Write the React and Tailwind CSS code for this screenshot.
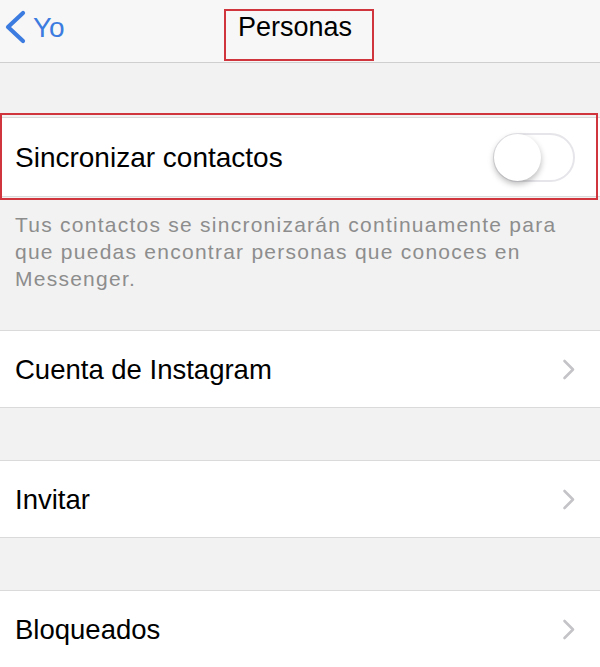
import { Fragment } from 'react';

const font = { fontFamily: '"Liberation Sans", Arial, sans-serif' };

function Chevron() {
  return (
    <svg width="14" height="21" viewBox="0 0 14 21" fill="none" className="shrink-0">
      <path d="M2.5 2 L11 10.5 L2.5 19" stroke="#c4c4c8" strokeWidth="2.6" strokeLinecap="round" strokeLinejoin="round" />
    </svg>
  );
}

function Row({ label }) {
  return (
    <div className="flex h-[78px] items-center justify-between border-y border-[#dadada] bg-white pl-[15px] pr-[24px]">
      <span className="mt-[2px] text-[27.5px] text-black">{label}</span>
      <Chevron />
    </div>
  );
}

export default function App() {
  const rows = ['Cuenta de Instagram', 'Invitar', 'Bloqueados'];

  return (
    <div className="h-[667px] w-[600px] overflow-hidden bg-[#f2f2f2]" style={font}>
      {/* nav bar */}
      <div className="grid h-[63px] grid-cols-[1fr_auto_1fr] border-b border-[#cfcfcf] bg-[#f7f7f7]">
        <div className="flex items-start pt-[10px] pl-[4px]">
          <svg width="24" height="34" viewBox="0 0 24 34" fill="none">
            <path d="M19 3 L4 17 L19 31" stroke="#3c7ce0" strokeWidth="4.2" strokeLinecap="round" strokeLinejoin="round" />
          </svg>
          <span className="ml-[5px] mt-[1px] text-[28px] leading-[34px] text-[#3c7ce0]">Yo</span>
        </div>
        <div className="relative pr-[10px] pt-[10px]">
          <span className="text-[27px] leading-[34px] text-black">Personas</span>
          <div className="pointer-events-none absolute left-[-14px] right-[-12px] top-[9px] h-[52px] border-2 border-[#d0353d]" />
        </div>
        <div />
      </div>

      {/* sync section */}
      <div className="pt-[54px]">
        <div className="relative">
          <div className="flex h-[80px] items-center justify-between border-y border-[#dadada] bg-white pl-[15px] pr-[25px]">
            <span className="mt-[2px] text-[28px] text-black">Sincronizar contactos</span>
            <div className="flex h-[49px] w-[82px] items-center rounded-full border-2 border-[#e6e6ea] bg-white">
              <div className="h-[47px] w-[47px] -ml-[1px] rounded-full bg-white shadow-[0_3px_6px_rgba(0,0,0,0.28)]" />
            </div>
          </div>
          <div className="pointer-events-none absolute inset-x-0 right-[2px] -top-[4px] -bottom-[3px] border-2 border-[#d0353d]" />
        </div>
        <p className="px-[15px] pb-[38px] pt-[14px] text-[21px] leading-[27px] tracking-[1.25px] text-[#8d8d8d]">
          Tus contactos se sincronizarán continuamente para que puedas encontrar personas que conoces en Messenger.
        </p>
      </div>

      {rows.map((label, i) => (
        <Fragment key={label}>
          {i > 0 && <div className="h-[52px]" />}
          <Row label={label} />
        </Fragment>
      ))}
    </div>
  );
}
